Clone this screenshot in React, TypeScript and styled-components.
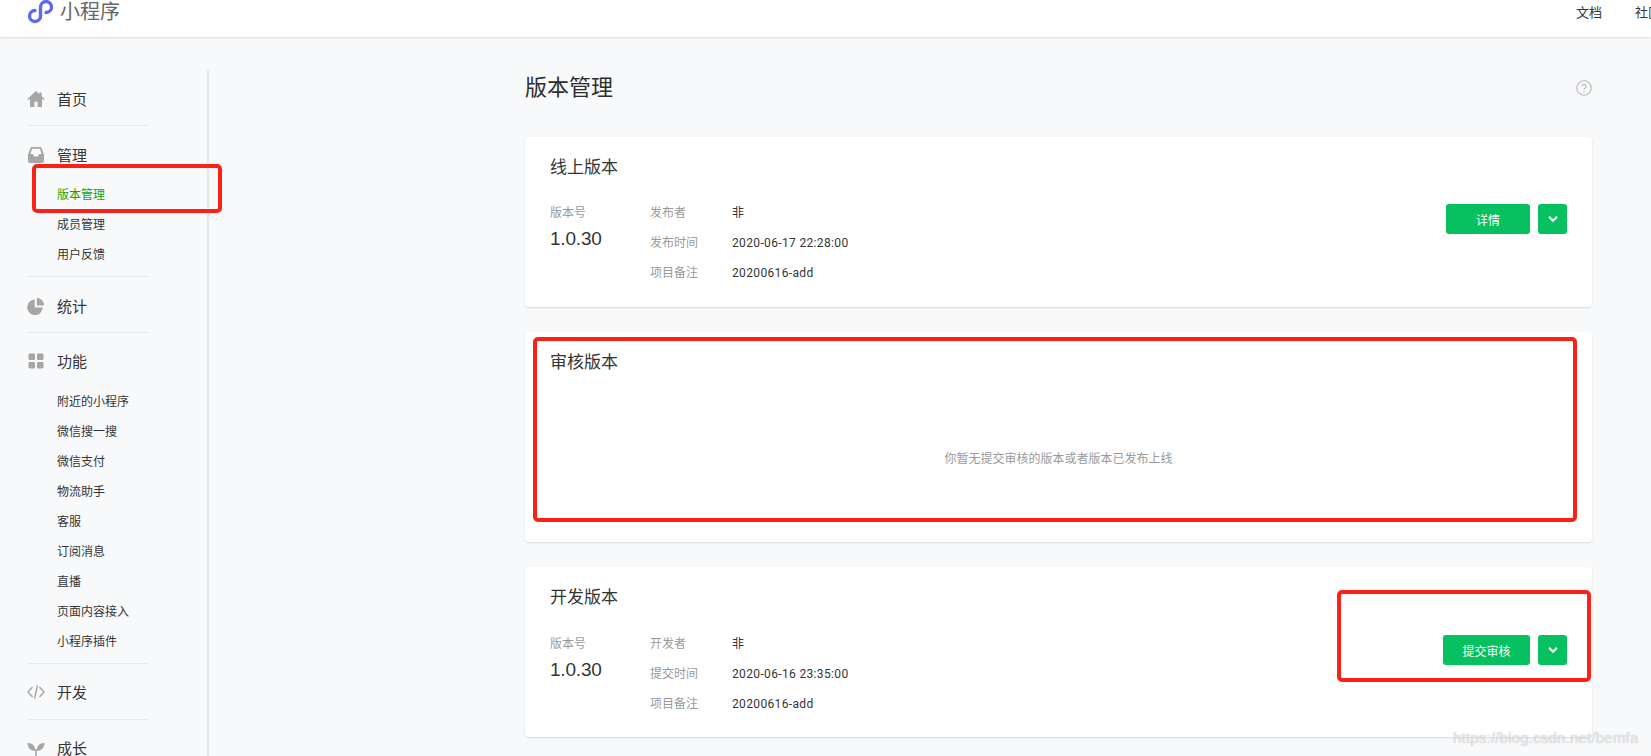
import React from "react";
import styled, { createGlobalStyle } from "styled-components";

const GlobalStyle = createGlobalStyle`
  html, body {
    margin: 0;
    padding: 0;
    height: 100%;
    overflow: hidden;
    background: #f8f9fb;
  }

  body {
    font-family: "Roboto", "Noto Sans CJK SC", sans-serif;
    color: #353535;
  }
`;

const Page = styled.div`
  position: relative;
  width: 1651px;
  height: 756px;
  overflow: hidden;
`;

const TopBar = styled.header`
  display: flex;
  justify-content: space-between;
  align-items: flex-start;
  height: 37px;
  box-sizing: border-box;
  padding-left: 27px;
  background: #fff;
  box-shadow: 0 1px 2px rgba(0, 0, 0, 0.12);
  overflow: hidden;
`;

const Brand = styled.div`
  display: flex;
  align-items: flex-start;
  gap: 7px;
`;

const LogoMark = styled.svg`
  width: 26px;
  height: 24px;
`;

const BrandName = styled.span`
  font-size: 20px;
  line-height: 24px;
  color: #666;
`;

const TopLinks = styled.nav`
  display: flex;
  gap: 33px;
  width: 75px;
  flex: none;
  padding-top: 1px;
`;

const TopLink = styled.span`
  flex: none;
  font-size: 13px;
  line-height: 24px;
`;

const Body = styled.div`
  display: flex;
  align-items: flex-start;
  padding-top: 33px;
`;

const Sidebar = styled.aside`
  flex: none;
  width: 209px;
  height: 700px;
  box-sizing: border-box;
  border-right: 2px solid #e6e7ea;
`;

const NavSection = styled.section<{ $top: number; $bottom: number }>`
  margin-left: 27px;
  padding: ${(p) => p.$top}px 0 ${(p) => p.$bottom}px;
  width: 122px;
  border-bottom: 1px solid #e7e8eb;

  &:last-child {
    border-bottom: none;
  }
`;

const NavHeading = styled.div`
  display: flex;
  align-items: center;
  height: 30px;
  gap: 12px;
  margin-right: -30px;
`;

const NavLabel = styled.span`
  font-size: 15px;
  margin-bottom: 2px;
`;

const NavIcon = styled.svg`
  flex: none;
  width: 18px;
  height: 18px;
  fill: #a6a6a6;
`;

const SubList = styled.div<{ $gap: number }>`
  margin-top: ${(p) => p.$gap}px;
  padding-left: 30px;
`;

const SubItem = styled.div<{ $active?: boolean }>`
  height: 30px;
  line-height: 32px;
  font-size: 12px;
  white-space: nowrap;
  color: ${(p) => (p.$active ? "#09a709" : "#353535")};
`;

const Main = styled.main`
  flex: none;
  width: 1067px;
  margin-left: 316px;
`;

const TitleRow = styled.div`
  display: flex;
  justify-content: space-between;
  align-items: center;
  height: 30px;
  margin-bottom: 37px;
`;

const PageTitle = styled.h1`
  margin: 0;
  font-size: 22px;
  font-weight: 400;
  color: #2e2e2e;
`;

const HelpIcon = styled.svg`
  width: 16px;
  height: 16px;
  margin-top: 5px;
`;

const Card = styled.section<{ $height: number }>`
  position: relative;
  height: ${(p) => p.$height}px;
  box-sizing: border-box;
  margin-bottom: 25px;
  padding: 19px 25px 0 25px;
  background: #fff;
  border-radius: 4px;
  box-shadow: 0 1px 2px rgba(0, 0, 0, 0.13);
`;

const CardTitle = styled.h2`
  margin: 0;
  font-size: 17px;
  line-height: 22px;
  font-weight: 400;
  color: #353535;
`;

const CardBody = styled.div<{ $top: number }>`
  display: flex;
  justify-content: space-between;
  margin-top: ${(p) => p.$top}px;
`;

const VersionColumn = styled.div`
  width: 100px;
`;

const MutedLabel = styled.div`
  font-size: 12px;
  line-height: 16px;
  color: #9a9a9a;
`;

const VersionNumber = styled.div`
  margin-top: 6px;
  font-size: 19px;
  line-height: 24px;
  letter-spacing: -0.2px;
  font-family: "Liberation Sans", sans-serif;
  color: #353535;
`;

const Details = styled.div`
  flex: 1;
  display: grid;
  grid-template-columns: 82px 1fr;
  grid-auto-rows: 29.8px;
  margin-top: -7px;
  font-size: 12px;
  line-height: 30px;
`;

const DetailLabel = styled.span`
  color: #9a9a9a;
`;

const DetailValue = styled.span`
  color: #353535;
  letter-spacing: 0.35px;
`;

const Actions = styled.div`
  display: flex;
  gap: 8px;
  margin-top: -1px;
`;

const PrimaryButton = styled.button<{ $width: number }>`
  width: ${(p) => p.$width}px;
  height: 30px;
  padding: 0;
  border: none;
  border-radius: 3px;
  background: #07c160;
  color: #fff;
  font: inherit;
  font-size: 12px;
`;

const ChevronButton = styled.button`
  display: flex;
  align-items: center;
  justify-content: center;
  width: 29px;
  height: 30px;
  padding: 0;
  border: none;
  border-radius: 3px;
  background: #07c160;
`;

const EmptyNote = styled.p`
  margin: 78px 0 0;
  text-align: center;
  font-size: 12px;
  line-height: 16px;
  color: #9a9a9a;
`;

const Annotation = styled.div<{ $x: number; $y: number; $w: number; $h: number }>`
  position: absolute;
  left: ${(p) => p.$x}px;
  top: ${(p) => p.$y}px;
  width: ${(p) => p.$w}px;
  height: ${(p) => p.$h}px;
  box-sizing: border-box;
  border: 4px solid #fb2116;
  border-radius: 5px;
  pointer-events: none;
`;

const Watermark = styled.div`
  position: absolute;
  left: 1453px;
  top: 728px;
  font-family: "Liberation Sans", sans-serif;
  font-size: 15px;
  line-height: 20px;
  letter-spacing: 0.2px;
  color: rgba(255, 255, 255, 0.65);
  text-shadow: 0 0 1px rgba(120, 120, 120, 0.6);
`;

const Chevron = () => (
  <svg width="10" height="8" viewBox="0 0 10 8">
    <path d="M1 1.8 5 5.8 9 1.8" fill="none" stroke="#fff" strokeWidth="2.2" />
  </svg>
);

interface VersionCardProps {
  title: string;
  height: number;
  rows: [string, string][];
  action: string;
  actionWidth: number;
  bodyTop: number;
}

const VersionCard = ({ title, height, rows, action, actionWidth, bodyTop }: VersionCardProps) => (
  <Card $height={height}>
    <CardTitle>{title}</CardTitle>
    <CardBody $top={bodyTop}>
      <VersionColumn>
        <MutedLabel>版本号</MutedLabel>
        <VersionNumber>1.0.30</VersionNumber>
      </VersionColumn>
      <Details>
        {rows.map(([label, value]) => (
          <React.Fragment key={label}>
            <DetailLabel>{label}</DetailLabel>
            <DetailValue>{value}</DetailValue>
          </React.Fragment>
        ))}
      </Details>
      <Actions>
        <PrimaryButton $width={actionWidth}>{action}</PrimaryButton>
        <ChevronButton aria-label="更多">
          <Chevron />
        </ChevronButton>
      </Actions>
    </CardBody>
  </Card>
);

export default function App() {
  return (
    <Page>
      <GlobalStyle />
      <TopBar>
        <Brand>
          <LogoMark viewBox="0 0 26 24">
            <path
              d="M8 10.500A5.500 5.500 0 1 0 13.500 16V7A5.500 5.500 0 1 1 19 12.500"
              fill="none"
              stroke="#5f6ae8"
              strokeWidth="3.4"
              strokeLinecap="round"
            />
          </LogoMark>
          <BrandName>小程序</BrandName>
        </Brand>
        <TopLinks>
          <TopLink>文档</TopLink>
          <TopLink>社区</TopLink>
        </TopLinks>
      </TopBar>

      <Body>
        <Sidebar>
          <NavSection $top={14} $bottom={11}>
            <NavHeading>
              <NavIcon viewBox="0 0 18 18">
                <path d="M9 1 .3 9l1 1.200L3 8.800V17h4.400v-5.200h3.200V17H15V8.800l1.700 1.400 1-1.200-3-2.800V2.500h-2.400v1.700z" />
              </NavIcon>
              <NavLabel>首页</NavLabel>
            </NavHeading>
          </NavSection>
          <NavSection $top={14} $bottom={7}>
            <NavHeading>
              <NavIcon viewBox="0 0 18 18">
                <path
                  fillRule="evenodd"
                  d="M4 1h10l3 7.500V15a2 2 0 0 1-2 2H3a2 2 0 0 1-2-2V8.500zm1.200 1.800L3.300 8H6l1 2.500h4L12 8h2.700l-1.900-5.200z"
                />
              </NavIcon>
              <NavLabel>管理</NavLabel>
            </NavHeading>
            <SubList $gap={9}>
              <SubItem $active>版本管理</SubItem>
              <SubItem>成员管理</SubItem>
              <SubItem>用户反馈</SubItem>
            </SubList>
          </NavSection>
          <NavSection $top={14} $bottom={11}>
            <NavHeading>
              <NavIcon viewBox="0 0 18 18">
                <path d="M7.700 2.500v8h8A7.800 7.800 0 1 1 7.700 2.500z" />
                <path d="M9.800 1a7.200 7.200 0 0 1 7.200 7.500H9.800z" />
              </NavIcon>
              <NavLabel>统计</NavLabel>
            </NavHeading>
          </NavSection>
          <NavSection $top={13} $bottom={7}>
            <NavHeading>
              <NavIcon viewBox="0 0 18 18">
                <rect x="1.500" y="1.500" width="6.500" height="6.500" rx="1" />
                <rect x="10" y="1.500" width="6.500" height="6.500" rx="1" />
                <rect x="1.500" y="10" width="6.500" height="6.500" rx="1" />
                <rect x="10" y="10" width="6.500" height="6.500" rx="1" />
              </NavIcon>
              <NavLabel>功能</NavLabel>
            </NavHeading>
            <SubList $gap={10}>
              <SubItem>附近的小程序</SubItem>
              <SubItem>微信搜一搜</SubItem>
              <SubItem>微信支付</SubItem>
              <SubItem>物流助手</SubItem>
              <SubItem>客服</SubItem>
              <SubItem>订阅消息</SubItem>
              <SubItem>直播</SubItem>
              <SubItem>页面内容接入</SubItem>
              <SubItem>小程序插件</SubItem>
            </SubList>
          </NavSection>
          <NavSection $top={13} $bottom={12}>
            <NavHeading>
              <NavIcon viewBox="0 0 18 18" fill="none" style={{ fill: "none" }}>
                <path d="M5.500 4 1 9l4.500 5M12.500 4 17 9l-4.500 5M10.500 2.500l-3 13" stroke="#a6a6a6" strokeWidth="1.400" />
              </NavIcon>
              <NavLabel>开发</NavLabel>
            </NavHeading>
          </NavSection>
          <NavSection $top={13} $bottom={0}>
            <NavHeading>
              <NavIcon viewBox="0 0 18 18">
                <path d="M8.200 12C4 12 .5 9 .5 4c5-.2 7.700 2.800 7.700 8zM9.800 12c0-5.200 2.700-8.200 7.700-8 0 5-3.500 8-7.700 8z" />
                <rect x="8.200" y="10" width="1.600" height="8" />
              </NavIcon>
              <NavLabel>成长</NavLabel>
            </NavHeading>
          </NavSection>
        </Sidebar>

        <Main>
          <TitleRow>
            <PageTitle>版本管理</PageTitle>
            <HelpIcon viewBox="0 0 16 16">
              <circle cx="8" cy="8" r="7.200" fill="none" stroke="#b9b9b9" strokeWidth="1.100" />
              <path d="M5.900 6.300a2.100 2.100 0 1 1 3.200 1.800c-.7.400-1.100.8-1.100 1.700" fill="none" stroke="#b9b9b9" strokeWidth="1.100" />
              <circle cx="8" cy="11.700" r=".8" fill="#b9b9b9" />
            </HelpIcon>
          </TitleRow>

          <VersionCard
            title="线上版本"
            height={170}
            action="详情"
            actionWidth={84}
            bodyTop={27}
            rows={[
              ["发布者", "非"],
              ["发布时间", "2020-06-17 22:28:00"],
              ["项目备注", "20200616-add"],
            ]}
          />

          <Card $height={210}>
            <CardTitle>审核版本</CardTitle>
            <EmptyNote>你暂无提交审核的版本或者版本已发布上线</EmptyNote>
          </Card>

          <VersionCard
            title="开发版本"
            height={170}
            action="提交审核"
            actionWidth={87}
            bodyTop={28}
            rows={[
              ["开发者", "非"],
              ["提交时间", "2020-06-16 23:35:00"],
              ["项目备注", "20200616-add"],
            ]}
          />
        </Main>
      </Body>

      <Annotation $x={32} $y={164} $w={190} $h={49} />
      <Annotation $x={533} $y={337} $w={1044} $h={185} />
      <Annotation $x={1337} $y={590} $w={254} $h={92} />
      <Watermark>https://blog.csdn.net/bemfa</Watermark>
    </Page>
  );
}
